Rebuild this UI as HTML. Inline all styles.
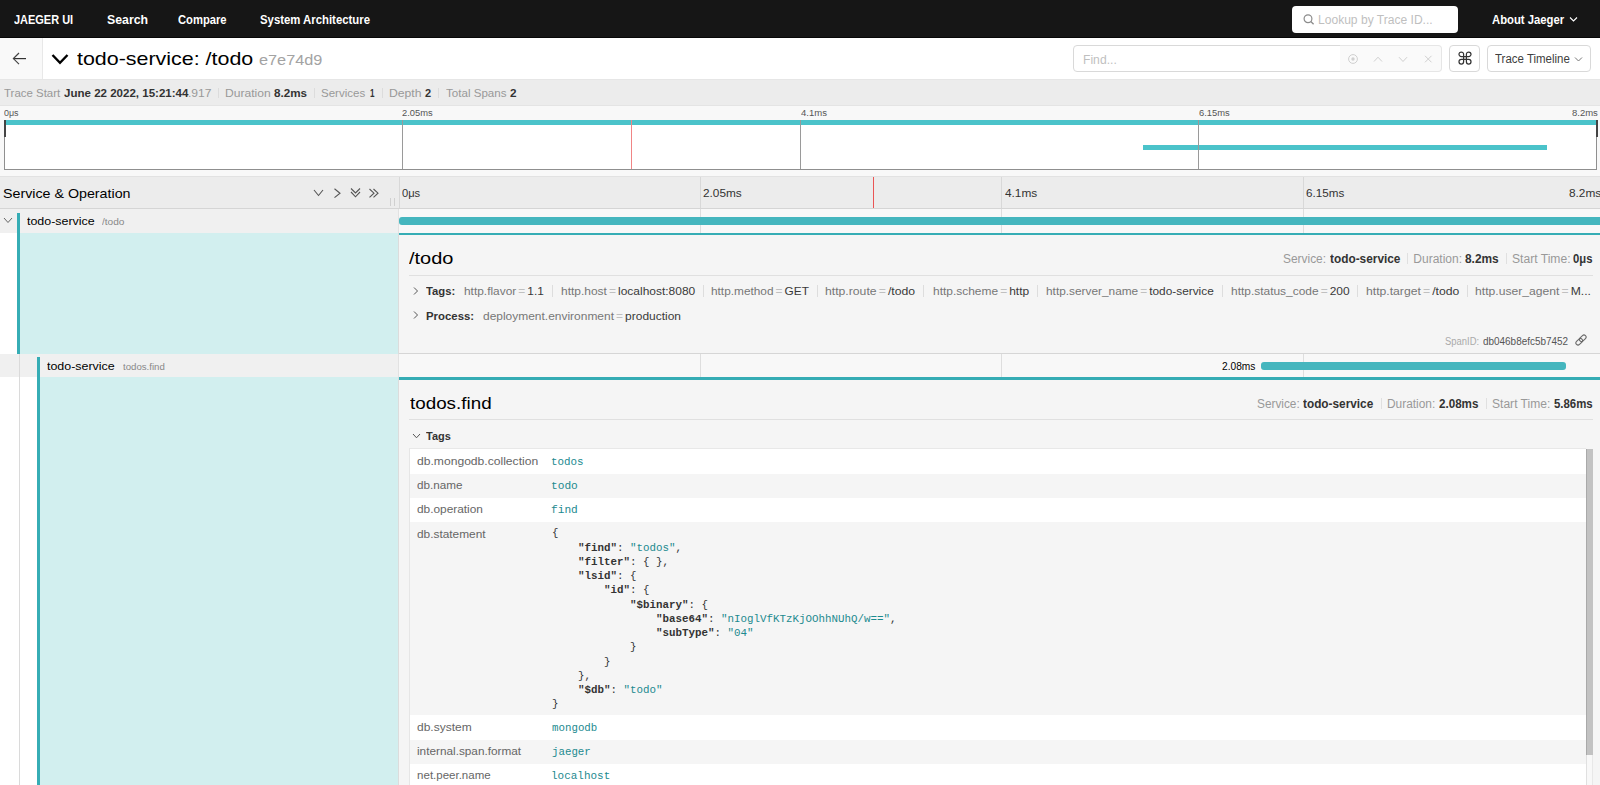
<!DOCTYPE html>
<html><head><meta charset="utf-8"><title>Jaeger UI</title>
<style>
html,body{margin:0;padding:0;width:1600px;height:785px;overflow:hidden;background:#fff;font-family:"Liberation Sans",sans-serif}
.a{position:absolute}
.t{position:absolute;white-space:pre;line-height:1;font-family:"Liberation Sans",sans-serif}
.m{font-family:"Liberation Mono",monospace}
.js b{font-weight:700;color:#333}
.js i{font-style:normal;color:#1c8a8f}
.kv .k{color:#777}
.kv .eq{color:#c0c0c0;margin:0 2px}
.kv .v{color:#3a3a3a}
</style></head><body>
<div class="a" style="left:0px;top:0px;width:1600px;height:38px;background:#161616"></div>
<div class="a" style="left:0px;top:37px;width:1600px;height:1px;background:#070707"></div>
<div class="t " style="top:13.75px;font-size:12px;font-weight:700;left:13.75px;transform:scaleX(0.9141);transform-origin:0 0;color:#fff;">JAEGER UI</div>
<div class="t " style="top:13.75px;font-size:12px;font-weight:700;left:106.50px;transform:scaleX(1.0250);transform-origin:0 0;color:#fff;">Search</div>
<div class="t " style="top:13.75px;font-size:12px;font-weight:700;left:177.70px;transform:scaleX(0.9346);transform-origin:0 0;color:#fff;">Compare</div>
<div class="t " style="top:13.75px;font-size:12px;font-weight:700;left:260.20px;transform:scaleX(0.9457);transform-origin:0 0;color:#fff;">System Architecture</div>
<div class="a" style="left:1292px;top:6px;width:166px;height:26.5px;background:#fff;border-radius:4px"></div>
<svg class="a" style="left:1303px;top:14px" width="12" height="11" viewBox="0 0 12 11"><circle cx="5" cy="4.7" r="3.9" fill="none" stroke="#8c8c8c" stroke-width="1.2"/><line x1="7.8" y1="7.5" x2="10.6" y2="10.3" stroke="#8c8c8c" stroke-width="1.3"/></svg>
<div class="t " style="top:13.60px;font-size:12px;font-weight:400;left:1318.39px;transform:scaleX(1.0054);transform-origin:0 0;color:#bfbfbf;">Lookup by Trace ID...</div>
<div class="t " style="top:13.60px;font-size:12px;font-weight:700;left:1491.60px;transform:scaleX(0.9403);transform-origin:0 0;color:#fff;">About Jaeger</div>
<svg class="a" style="left:1569px;top:16px" width="9" height="7" viewBox="0 0 9 7"><polyline points="1,1.5 4.5,5 8,1.5" fill="none" stroke="#fff" stroke-width="1.1"/></svg>
<div class="a" style="left:0px;top:38px;width:1600px;height:41px;background:#fff"></div>
<div class="a" style="left:0px;top:38px;width:42px;height:41px;background:#f9f9f9;border-right:1px solid #e8e8e8"></div>
<svg class="a" style="left:12px;top:52px" width="14" height="14" viewBox="0 0 14 14"><line x1="1.5" y1="6.6" x2="14" y2="6.6" stroke="#333" stroke-width="1.2"/><polyline points="7,1 1.4,6.6 7,12.2" fill="none" stroke="#444" stroke-width="1.2"/></svg>
<svg class="a" style="left:51px;top:52.6px" width="18" height="12" viewBox="0 0 18 12"><polyline points="1.5,2 9,9.8 16.5,2" fill="none" stroke="#000" stroke-width="2.4"/></svg>
<div class="t " style="top:49.80px;font-size:18.5px;font-weight:400;left:76.60px;transform:scaleX(1.1579);transform-origin:0 0;color:#000;">todo-service: /todo</div>
<div class="t " style="top:52.00px;font-size:15px;font-weight:400;left:258.80px;transform:scaleX(1.0862);transform-origin:0 0;color:#a3a3a3;">e7e74d9</div>
<div class="a" style="left:1073px;top:45px;width:268px;height:27px;background:#fff;border:1px solid #d9d9d9;border-radius:4px 0 0 4px;box-sizing:border-box"></div>
<div class="t " style="top:53.70px;font-size:12px;font-weight:400;left:1082.59px;transform:scaleX(1.0125);transform-origin:0 0;color:#bfbfbf;">Find...</div>
<div class="a" style="left:1340px;top:45px;width:102px;height:27px;background:#fafafa;border:1px solid #e6e6e6;border-left:none;border-radius:0 4px 4px 0;box-sizing:border-box"></div>
<svg class="a" style="left:1347px;top:52px" width="95" height="14" viewBox="0 0 95 14"><circle cx="6" cy="7" r="4.4" fill="none" stroke="#d0d0d0" stroke-width="1"/><circle cx="6" cy="7" r="1.7" fill="#d0d0d0"/><polyline points="27,9.5 31,5.2 35,9.5" fill="none" stroke="#d0d0d0" stroke-width="1"/><polyline points="52,5.2 56,9.5 60,5.2" fill="none" stroke="#d0d0d0" stroke-width="1"/><line x1="78" y1="3.8" x2="84.5" y2="10.3" stroke="#d0d0d0" stroke-width="1"/><line x1="84.5" y1="3.8" x2="78" y2="10.3" stroke="#d0d0d0" stroke-width="1"/></svg>
<div class="a" style="left:1449px;top:45px;width:31px;height:27px;background:#fff;border:1px solid #d9d9d9;border-radius:4px;box-sizing:border-box"></div>
<svg class="a" style="left:1457px;top:50px" width="16" height="16" viewBox="0 0 16 16"><path d="M6.6 6.6 V4.3 A2.3 2.3 0 1 0 4.3 6.6 H11.7 A2.3 2.3 0 1 0 9.4 4.3 V11.7 A2.3 2.3 0 1 0 11.7 9.4 H4.3 A2.3 2.3 0 1 0 6.6 11.7 Z" fill="none" stroke="#333" stroke-width="1.25"/></svg>
<div class="a" style="left:1487px;top:45px;width:104px;height:27px;background:#fff;border:1px solid #d9d9d9;border-radius:4px;box-sizing:border-box"></div>
<div class="t " style="top:52.80px;font-size:12px;font-weight:400;left:1495.00px;transform:scaleX(0.9564);transform-origin:0 0;color:#404040;">Trace Timeline</div>
<svg class="a" style="left:1574px;top:56px" width="9" height="7" viewBox="0 0 9 7"><polyline points="1,1.5 4.5,5 8,1.5" fill="none" stroke="#777" stroke-width="1"/></svg>
<div class="a" style="left:0px;top:79px;width:1600px;height:1px;background:#e6e6e6"></div>
<div class="a" style="left:0px;top:80px;width:1600px;height:25px;background:#ececec"></div>
<div class="a" style="left:0px;top:105px;width:1600px;height:1px;background:#e4e4e4"></div>
<div class="t " style="top:87.70px;font-size:11px;font-weight:400;left:3.60px;transform:scaleX(1.0407);transform-origin:0 0;color:#999;">Trace Start</div>
<div class="t " style="top:87.70px;font-size:11px;font-weight:700;left:63.70px;transform:scaleX(1.0487);transform-origin:0 0;color:#333;">June 22 2022, 15:21:44</div>
<div class="t " style="top:87.70px;font-size:11px;font-weight:400;left:187.80px;transform:scaleX(1.1000);transform-origin:0 0;color:#999;">.917</div>
<div class="t " style="top:87.70px;font-size:11px;font-weight:400;left:224.50px;transform:scaleX(1.1000);transform-origin:0 0;color:#999;">Duration</div>
<div class="t " style="top:87.70px;font-size:11px;font-weight:700;left:273.60px;transform:scaleX(1.0581);transform-origin:0 0;color:#333;">8.2ms</div>
<div class="t " style="top:87.70px;font-size:11px;font-weight:400;left:321.00px;transform:scaleX(1.0476);transform-origin:0 0;color:#999;">Services</div>
<div class="t " style="top:87.70px;font-size:11px;font-weight:700;left:370.00px;transform:scaleX(0.7333);transform-origin:0 0;color:#333;">1</div>
<div class="t " style="top:87.70px;font-size:11px;font-weight:400;left:388.89px;transform:scaleX(1.1071);transform-origin:0 0;color:#999;">Depth</div>
<div class="t " style="top:87.70px;font-size:11px;font-weight:700;left:425.00px;color:#333;">2</div>
<div class="t " style="top:87.70px;font-size:11px;font-weight:400;left:446.00px;transform:scaleX(1.0526);transform-origin:0 0;color:#999;">Total Spans</div>
<div class="t " style="top:87.70px;font-size:11px;font-weight:700;left:510.00px;transform:scaleX(1.0667);transform-origin:0 0;color:#333;">2</div>
<div class="a" style="left:217.7px;top:88px;width:1px;height:10px;background:#dcdcdc"></div>
<div class="a" style="left:313.6px;top:88px;width:1px;height:10px;background:#dcdcdc"></div>
<div class="a" style="left:382.4px;top:88px;width:1px;height:10px;background:#dcdcdc"></div>
<div class="a" style="left:438.4px;top:88px;width:1px;height:10px;background:#dcdcdc"></div>
<div class="a" style="left:0px;top:106px;width:1600px;height:70px;background:#f8f8f8"></div>
<div class="t " style="top:109.30px;font-size:8.5px;font-weight:400;left:3.60px;transform:scaleX(1.0500);transform-origin:0 0;color:#555;">0μs</div>
<div class="t " style="top:109.30px;font-size:8.5px;font-weight:400;left:401.60px;transform:scaleX(1.1000);transform-origin:0 0;color:#555;">2.05ms</div>
<div class="t " style="top:109.30px;font-size:8.5px;font-weight:400;left:800.50px;transform:scaleX(1.1196);transform-origin:0 0;color:#555;">4.1ms</div>
<div class="t " style="top:109.30px;font-size:8.5px;font-weight:400;left:1198.90px;transform:scaleX(1.1036);transform-origin:0 0;color:#555;">6.15ms</div>
<div class="t " style="top:109.30px;font-size:8.5px;font-weight:400;left:1571.80px;transform:scaleX(1.1174);transform-origin:0 0;color:#555;">8.2ms</div>
<div class="a" style="left:4px;top:120px;width:1593px;height:50px;background:#fff;border:1px solid #8f8f8f;border-top:none;box-sizing:border-box"></div>
<div class="a" style="left:5px;top:120px;width:1591px;height:4.5px;background:#4bc3ca"></div>
<div class="a" style="left:1143px;top:145px;width:404px;height:5px;background:#4bc3ca"></div>
<div class="a" style="left:402px;top:120px;width:1px;height:49px;background:#9a9a9a"></div>
<div class="a" style="left:800px;top:120px;width:1px;height:49px;background:#9a9a9a"></div>
<div class="a" style="left:1198px;top:120px;width:1px;height:49px;background:#9a9a9a"></div>
<div class="a" style="left:631px;top:120px;width:1.2px;height:49px;background:#f08585"></div>
<div class="a" style="left:3.5px;top:120px;width:2px;height:17px;background:#444"></div>
<div class="a" style="left:1595.5px;top:120px;width:2px;height:17px;background:#444"></div>
<div class="a" style="left:0px;top:176px;width:1600px;height:1px;background:#e2e2e2"></div>
<div class="a" style="left:0px;top:177px;width:1600px;height:31px;background:#ececec"></div>
<div class="a" style="left:0px;top:208px;width:1600px;height:1px;background:#d5d5d5"></div>
<div class="t " style="top:187.20px;font-size:13.5px;font-weight:400;left:2.64px;transform:scaleX(1.0555);transform-origin:0 0;color:#000;">Service &amp; Operation</div>
<svg class="a" style="left:312px;top:187px" width="70" height="12" viewBox="0 0 70 12"><polyline points="2,3 6.5,8.5 11,3" fill="none" stroke="#555" stroke-width="1.1"/><polyline points="22.5,1.8 28,6.2 22.5,10.6" fill="none" stroke="#555" stroke-width="1.1"/><polyline points="39,1.5 43.5,6 48,1.5" fill="none" stroke="#555" stroke-width="1.1"/><polyline points="39,5 43.5,9.8 48,5" fill="none" stroke="#555" stroke-width="1.1"/><polyline points="57.5,2 62,6.2 57.5,10.4" fill="none" stroke="#555" stroke-width="1.1"/><polyline points="61.5,2 66,6.2 61.5,10.4" fill="none" stroke="#555" stroke-width="1.1"/></svg>
<div class="a" style="left:390px;top:198px;width:1px;height:8px;background:#d0d0d0"></div>
<div class="a" style="left:394px;top:198px;width:1px;height:8px;background:#d0d0d0"></div>
<div class="a" style="left:399px;top:177px;width:1px;height:31px;background:#d8d8d8"></div>
<div class="a" style="left:700px;top:177px;width:1px;height:31px;background:#d8d8d8"></div>
<div class="a" style="left:1001px;top:177px;width:1px;height:31px;background:#d8d8d8"></div>
<div class="a" style="left:1303px;top:177px;width:1px;height:31px;background:#d8d8d8"></div>
<div class="t " style="top:188.40px;font-size:11.5px;font-weight:400;left:401.90px;transform:scaleX(0.9684);transform-origin:0 0;color:#333;">0μs</div>
<div class="t " style="top:188.40px;font-size:11.5px;font-weight:400;left:703.00px;transform:scaleX(1.0263);transform-origin:0 0;color:#333;">2.05ms</div>
<div class="t " style="top:188.40px;font-size:11.5px;font-weight:400;left:1004.90px;transform:scaleX(1.0290);transform-origin:0 0;color:#333;">4.1ms</div>
<div class="t " style="top:188.40px;font-size:11.5px;font-weight:400;left:1306.10px;transform:scaleX(1.0132);transform-origin:0 0;color:#333;">6.15ms</div>
<div class="t " style="top:188.40px;font-size:11.5px;font-weight:400;left:1568.60px;transform:scaleX(1.0290);transform-origin:0 0;color:#333;">8.2ms</div>
<div class="a" style="left:873px;top:177px;width:1.3px;height:31px;background:#ea5555"></div>
<div class="a" style="left:0px;top:209px;width:399px;height:24px;background:#f0f0f0"></div>
<div class="a" style="left:399px;top:209px;width:1201px;height:24px;background:#f8f8f8"></div>
<div class="a" style="left:700px;top:209px;width:1px;height:24px;background:#dedede"></div>
<div class="a" style="left:1001px;top:209px;width:1px;height:24px;background:#dedede"></div>
<div class="a" style="left:1303px;top:209px;width:1px;height:24px;background:#dedede"></div>
<svg class="a" style="left:3px;top:217px" width="10" height="7" viewBox="0 0 10 7"><polyline points="1,1 5,5.5 9,1" fill="none" stroke="#666" stroke-width="1"/></svg>
<div class="t " style="top:215.90px;font-size:11.5px;font-weight:400;left:27.10px;transform:scaleX(1.0810);transform-origin:0 0;color:#000;">todo-service</div>
<div class="t " style="top:216.90px;font-size:9.5px;font-weight:400;left:102.40px;transform:scaleX(1.0619);transform-origin:0 0;color:#888;">/todo</div>
<div class="a" style="left:399px;top:217px;width:1201px;height:8px;background:#45b6be;border-radius:3px 0 0 3px"></div>
<div class="a" style="left:398px;top:209px;width:1px;height:24px;background:#e2e2e2"></div>
<div class="a" style="left:399px;top:233px;width:1201px;height:2px;background:#36adb5"></div>
<div class="a" style="left:0px;top:233px;width:17px;height:121px;background:#fff"></div>
<div class="a" style="left:17px;top:212.8px;width:3px;height:141.2px;background:#36adb5"></div>
<div class="a" style="left:20px;top:233px;width:379px;height:121px;background:#d2efef"></div>
<div class="a" style="left:399px;top:235px;width:1201px;height:118px;background:#f5f5f5"></div>
<div class="a" style="left:398px;top:233px;width:1px;height:121px;background:#dcdcdc"></div>
<div class="t " style="top:249.90px;font-size:16.5px;font-weight:400;left:409.10px;transform:scaleX(1.2111);transform-origin:0 0;color:#000;">/todo</div>
<div class="t " style="top:252.70px;font-size:12px;font-weight:400;left:1283.01px;transform:scaleX(0.9929);transform-origin:0 0;color:#999;">Service:</div>
<div class="t " style="top:252.70px;font-size:12px;font-weight:700;left:1329.80px;transform:scaleX(0.9873);transform-origin:0 0;color:#333;">todo-service</div>
<div class="t " style="top:252.70px;font-size:12px;font-weight:400;left:1413.30px;color:#999;">Duration:</div>
<div class="t " style="top:252.70px;font-size:12px;font-weight:700;left:1464.80px;transform:scaleX(0.9912);transform-origin:0 0;color:#333;">8.2ms</div>
<div class="t " style="top:252.70px;font-size:12px;font-weight:400;left:1511.89px;transform:scaleX(1.0089);transform-origin:0 0;color:#999;">Start Time:</div>
<div class="t " style="top:252.70px;font-size:12px;font-weight:700;left:1573.00px;transform:scaleX(0.9381);transform-origin:0 0;color:#333;">0μs</div>
<div class="a" style="left:1407px;top:252.7px;width:1px;height:11px;background:#e0e0e0"></div>
<div class="a" style="left:1505.5px;top:252.7px;width:1px;height:11px;background:#e0e0e0"></div>
<div class="a" style="left:409px;top:275px;width:1184px;height:1px;background:#e0e0e0"></div>
<svg class="a" style="left:412px;top:286px" width="8" height="10" viewBox="0 0 8 10"><polyline points="2,1.5 5.5,5 2,8.5" fill="none" stroke="#555" stroke-width="1"/></svg>
<svg class="a" style="left:412px;top:310px" width="8" height="10" viewBox="0 0 8 10"><polyline points="2,1.5 5.5,5 2,8.5" fill="none" stroke="#555" stroke-width="1"/></svg>
<div class="t " style="top:286.00px;font-size:11.5px;font-weight:700;left:426.30px;transform:scaleX(0.9793);transform-origin:0 0;color:#333;">Tags:</div>
<div class="t " style="top:310.60px;font-size:11.5px;font-weight:700;left:426.30px;transform:scaleX(0.9896);transform-origin:0 0;color:#333;">Process:</div>
<div class="t kv" style="top:286.00px;font-size:11.5px;font-weight:400;left:463.50px;transform:scaleX(1.0338);transform-origin:0 0;color:#333;"><span class="k">http.flavor</span><span class="eq">=</span><span class="v">1.1</span></div>
<div class="t kv" style="top:286.00px;font-size:11.5px;font-weight:400;left:560.50px;transform:scaleX(1.0403);transform-origin:0 0;color:#333;"><span class="k">http.host</span><span class="eq">=</span><span class="v">localhost:8080</span></div>
<div class="t kv" style="top:286.00px;font-size:11.5px;font-weight:400;left:711.30px;transform:scaleX(1.0295);transform-origin:0 0;color:#333;"><span class="k">http.method</span><span class="eq">=</span><span class="v">GET</span></div>
<div class="t kv" style="top:286.00px;font-size:11.5px;font-weight:400;left:825.40px;transform:scaleX(1.0612);transform-origin:0 0;color:#333;"><span class="k">http.route</span><span class="eq">=</span><span class="v">/todo</span></div>
<div class="t kv" style="top:286.00px;font-size:11.5px;font-weight:400;left:932.60px;transform:scaleX(1.0387);transform-origin:0 0;color:#333;"><span class="k">http.scheme</span><span class="eq">=</span><span class="v">http</span></div>
<div class="t kv" style="top:286.00px;font-size:11.5px;font-weight:400;left:1045.90px;transform:scaleX(1.0301);transform-origin:0 0;color:#333;"><span class="k">http.server_name</span><span class="eq">=</span><span class="v">todo-service</span></div>
<div class="t kv" style="top:286.00px;font-size:11.5px;font-weight:400;left:1230.70px;transform:scaleX(1.0377);transform-origin:0 0;color:#333;"><span class="k">http.status_code</span><span class="eq">=</span><span class="v">200</span></div>
<div class="t kv" style="top:286.00px;font-size:11.5px;font-weight:400;left:1365.60px;transform:scaleX(1.0591);transform-origin:0 0;color:#333;"><span class="k">http.target</span><span class="eq">=</span><span class="v">/todo</span></div>
<div class="t kv" style="top:286.00px;font-size:11.5px;font-weight:400;left:1475.40px;transform:scaleX(1.0560);transform-origin:0 0;color:#333;"><span class="k">http.user_agent</span><span class="eq">=</span><span class="v">M...</span></div>
<div class="a" style="left:551.7px;top:285px;width:1px;height:12px;background:#ddd"></div>
<div class="a" style="left:702.5px;top:285px;width:1px;height:12px;background:#ddd"></div>
<div class="a" style="left:817px;top:285px;width:1px;height:12px;background:#ddd"></div>
<div class="a" style="left:923.3px;top:285px;width:1px;height:12px;background:#ddd"></div>
<div class="a" style="left:1036.9px;top:285px;width:1px;height:12px;background:#ddd"></div>
<div class="a" style="left:1221.7px;top:285px;width:1px;height:12px;background:#ddd"></div>
<div class="a" style="left:1356.8px;top:285px;width:1px;height:12px;background:#ddd"></div>
<div class="a" style="left:1466.6px;top:285px;width:1px;height:12px;background:#ddd"></div>
<div class="t kv" style="top:310.60px;font-size:11.5px;font-weight:400;left:482.50px;transform:scaleX(1.0400);transform-origin:0 0;color:#333;"><span class="k">deployment.environment</span><span class="eq">=</span><span class="v">production</span></div>
<div class="t " style="top:337.00px;font-size:10px;font-weight:400;left:1445.00px;transform:scaleX(0.9444);transform-origin:0 0;color:#aaa;">SpanID:</div>
<div class="t " style="top:337.00px;font-size:10px;font-weight:400;left:1483.00px;transform:scaleX(0.9929);transform-origin:0 0;color:#555;">db046b8efc5b7452</div>
<svg class="a" style="left:1574.7px;top:334.3px" width="12" height="12" viewBox="0 0 12 12"><g transform="rotate(-45 6 6)" fill="none" stroke="#6a6a6a" stroke-width="1.1"><rect x="-0.3" y="3.9" width="7.6" height="4.2" rx="2.1"/><rect x="4.7" y="3.9" width="7.6" height="4.2" rx="2.1"/></g></svg>
<div class="a" style="left:399px;top:353px;width:1201px;height:1px;background:#d6d6d6"></div>
<div class="a" style="left:0px;top:354px;width:399px;height:23px;background:#f0f0f0"></div>
<div class="a" style="left:399px;top:354px;width:1201px;height:23px;background:#f8f8f8"></div>
<div class="a" style="left:700px;top:354px;width:1px;height:23px;background:#dedede"></div>
<div class="a" style="left:1001px;top:354px;width:1px;height:23px;background:#dedede"></div>
<div class="a" style="left:1303px;top:354px;width:1px;height:23px;background:#dedede"></div>
<div class="a" style="left:19px;top:354px;width:1px;height:431px;background:#dadada"></div>
<div class="a" style="left:37px;top:357.4px;width:3px;height:427.6px;background:#36adb5"></div>
<div class="t " style="top:360.80px;font-size:11.5px;font-weight:400;left:47.20px;transform:scaleX(1.0810);transform-origin:0 0;color:#000;">todo-service</div>
<div class="t " style="top:361.80px;font-size:9.5px;font-weight:400;left:122.60px;transform:scaleX(1.0146);transform-origin:0 0;color:#888;">todos.find</div>
<div class="a" style="left:1261px;top:362px;width:305px;height:8px;background:#45b6be;border-radius:3px"></div>
<div class="t " style="top:360.75px;font-size:10.5px;font-weight:400;left:1222.25px;transform:scaleX(0.9706);transform-origin:0 0;color:#000;text-shadow:0 0 2px #fff">2.08ms</div>
<div class="a" style="left:398px;top:354px;width:1px;height:23px;background:#e2e2e2"></div>
<div class="a" style="left:399px;top:377px;width:1201px;height:3px;background:#36adb5"></div>
<div class="a" style="left:0px;top:377px;width:19px;height:408px;background:#fff"></div>
<div class="a" style="left:20px;top:377px;width:17px;height:408px;background:#fff"></div>
<div class="a" style="left:40px;top:377px;width:359px;height:408px;background:#d2efef"></div>
<div class="a" style="left:399px;top:380px;width:1201px;height:405px;background:#f5f5f5"></div>
<div class="a" style="left:398px;top:377px;width:1px;height:408px;background:#dcdcdc"></div>
<div class="t " style="top:395.00px;font-size:17px;font-weight:400;left:410.00px;transform:scaleX(1.1068);transform-origin:0 0;color:#000;">todos.find</div>
<div class="t " style="top:397.50px;font-size:12px;font-weight:400;left:1256.61px;transform:scaleX(0.9857);transform-origin:0 0;color:#999;">Service:</div>
<div class="t " style="top:397.50px;font-size:12px;font-weight:700;left:1303.00px;transform:scaleX(0.9845);transform-origin:0 0;color:#333;">todo-service</div>
<div class="t " style="top:397.50px;font-size:12px;font-weight:400;left:1387.21px;transform:scaleX(0.9915);transform-origin:0 0;color:#999;">Duration:</div>
<div class="t " style="top:397.50px;font-size:12px;font-weight:700;left:1438.60px;transform:scaleX(0.9683);transform-origin:0 0;color:#333;">2.08ms</div>
<div class="t " style="top:397.50px;font-size:12px;font-weight:400;left:1492.39px;transform:scaleX(1.0054);transform-origin:0 0;color:#999;">Start Time:</div>
<div class="t " style="top:397.50px;font-size:12px;font-weight:700;left:1554.20px;transform:scaleX(0.9512);transform-origin:0 0;color:#333;">5.86ms</div>
<div class="a" style="left:1380.8px;top:397.5px;width:1px;height:11px;background:#e0e0e0"></div>
<div class="a" style="left:1485.5px;top:397.5px;width:1px;height:11px;background:#e0e0e0"></div>
<div class="a" style="left:409px;top:419px;width:1184px;height:1px;background:#e0e0e0"></div>
<svg class="a" style="left:412px;top:432px" width="9" height="8" viewBox="0 0 9 8"><polyline points="1,2 4.5,5.8 8,2" fill="none" stroke="#555" stroke-width="1"/></svg>
<div class="t " style="top:431.00px;font-size:11.5px;font-weight:700;left:426.20px;transform:scaleX(0.9538);transform-origin:0 0;color:#333;">Tags</div>
<div class="a" style="left:409px;top:448px;width:1177px;height:337px;background:#fff;border-top:1px solid #e8e8e8;border-left:1px solid #e6e6e6;box-sizing:border-box"></div>
<div class="t " style="top:456.40px;font-size:11.5px;font-weight:400;left:417.10px;transform:scaleX(1.0530);transform-origin:0 0;color:#666;">db.mongodb.collection</div>
<div class="t m" style="top:457.40px;font-size:11px;font-weight:400;left:551.21px;transform:scaleX(0.9875);transform-origin:0 0;color:#1c8a8f;">todos</div>
<div class="a" style="left:410px;top:474px;width:1176px;height:24px;background:#f5f5f5"></div>
<div class="t " style="top:480.40px;font-size:11.5px;font-weight:400;left:417.10px;transform:scaleX(1.0156);transform-origin:0 0;color:#666;">db.name</div>
<div class="t m" style="top:481.40px;font-size:11px;font-weight:400;left:551.18px;transform:scaleX(1.0160);transform-origin:0 0;color:#1c8a8f;">todo</div>
<div class="t " style="top:504.40px;font-size:11.5px;font-weight:400;left:417.10px;transform:scaleX(1.0312);transform-origin:0 0;color:#666;">db.operation</div>
<div class="t m" style="top:505.40px;font-size:11px;font-weight:400;left:551.18px;transform:scaleX(1.0160);transform-origin:0 0;color:#1c8a8f;">find</div>
<div class="a" style="left:410px;top:522px;width:1176px;height:193px;background:#f5f5f5"></div>
<div class="t " style="top:528.70px;font-size:11.5px;font-weight:400;left:417.10px;transform:scaleX(1.0313);transform-origin:0 0;color:#666;">db.statement</div>
<div class="t " style="top:722.30px;font-size:11.5px;font-weight:400;left:417.10px;transform:scaleX(1.0423);transform-origin:0 0;color:#666;">db.system</div>
<div class="t m" style="top:723.30px;font-size:11px;font-weight:400;left:552.20px;transform:scaleX(0.9804);transform-origin:0 0;color:#1c8a8f;">mongodb</div>
<div class="a" style="left:410px;top:740px;width:1176px;height:24px;background:#f5f5f5"></div>
<div class="t " style="top:746.30px;font-size:11.5px;font-weight:400;left:417.10px;transform:scaleX(1.0245);transform-origin:0 0;color:#666;">internal.span.format</div>
<div class="t m" style="top:747.30px;font-size:11px;font-weight:400;left:552.20px;transform:scaleX(0.9795);transform-origin:0 0;color:#1c8a8f;">jaeger</div>
<div class="t " style="top:770.40px;font-size:11.5px;font-weight:400;left:417.10px;color:#666;">net.peer.name</div>
<div class="t m" style="top:771.40px;font-size:11px;font-weight:400;left:551.20px;transform:scaleX(0.9966);transform-origin:0 0;color:#1c8a8f;">localhost</div>
<div class="t m js" style="top:528.35px;font-size:11px;font-weight:400;left:551.70px;color:#333;transform:scaleX(0.9848);transform-origin:0 0">{</div>
<div class="t m js" style="top:542.60px;font-size:11px;font-weight:400;left:577.70px;color:#333;transform:scaleX(0.9848);transform-origin:0 0"><b>"find"</b>: <i>"todos"</i>,</div>
<div class="t m js" style="top:556.85px;font-size:11px;font-weight:400;left:577.70px;color:#333;transform:scaleX(0.9848);transform-origin:0 0"><b>"filter"</b>: { },</div>
<div class="t m js" style="top:571.10px;font-size:11px;font-weight:400;left:577.70px;color:#333;transform:scaleX(0.9848);transform-origin:0 0"><b>"lsid"</b>: {</div>
<div class="t m js" style="top:585.35px;font-size:11px;font-weight:400;left:603.70px;color:#333;transform:scaleX(0.9848);transform-origin:0 0"><b>"id"</b>: {</div>
<div class="t m js" style="top:599.60px;font-size:11px;font-weight:400;left:629.70px;color:#333;transform:scaleX(0.9848);transform-origin:0 0"><b>"$binary"</b>: {</div>
<div class="t m js" style="top:613.85px;font-size:11px;font-weight:400;left:655.70px;color:#333;transform:scaleX(0.9848);transform-origin:0 0"><b>"base64"</b>: <i>"nIoglVfKTzKjOOhhNUhQ/w=="</i>,</div>
<div class="t m js" style="top:628.10px;font-size:11px;font-weight:400;left:655.70px;color:#333;transform:scaleX(0.9848);transform-origin:0 0"><b>"subType"</b>: <i>"04"</i></div>
<div class="t m js" style="top:642.35px;font-size:11px;font-weight:400;left:629.70px;color:#333;transform:scaleX(0.9848);transform-origin:0 0">}</div>
<div class="t m js" style="top:656.60px;font-size:11px;font-weight:400;left:603.70px;color:#333;transform:scaleX(0.9848);transform-origin:0 0">}</div>
<div class="t m js" style="top:670.85px;font-size:11px;font-weight:400;left:577.70px;color:#333;transform:scaleX(0.9848);transform-origin:0 0">},</div>
<div class="t m js" style="top:685.10px;font-size:11px;font-weight:400;left:577.70px;color:#333;transform:scaleX(0.9848);transform-origin:0 0"><b>"$db"</b>: <i>"todo"</i></div>
<div class="t m js" style="top:699.35px;font-size:11px;font-weight:400;left:551.70px;color:#333;transform:scaleX(0.9848);transform-origin:0 0">}</div>
<div class="a" style="left:1586px;top:449px;width:7px;height:306px;background:#c2c2c2;border-left:1px solid #a9a9a9;box-sizing:border-box"></div>
<div class="a" style="left:1586px;top:755px;width:7px;height:30px;background:#f8f8f8;border-left:1px solid #e0e0e0;border-right:1px solid #e8e8e8;box-sizing:border-box"></div>
</body></html>
